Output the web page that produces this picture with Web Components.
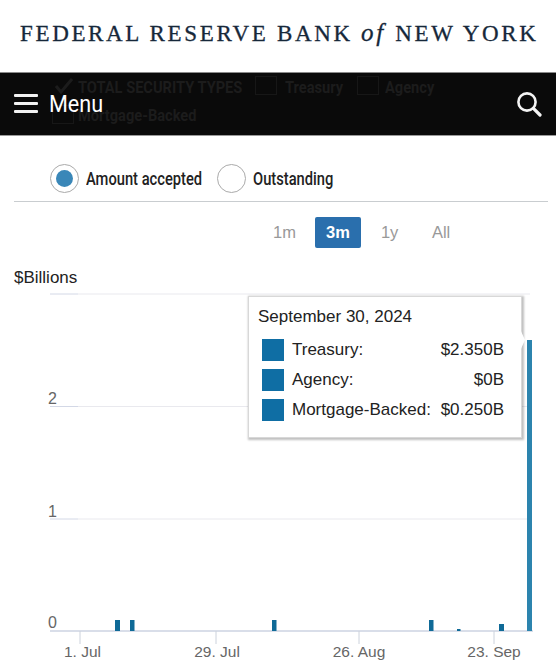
<!DOCTYPE html>
<html>
<head>
<meta charset="utf-8">
<style>
  html, body { margin: 0; background: #fff; }
  body { width: 556px; height: 668px; overflow: hidden; font-family: "Liberation Sans", Arial, sans-serif; }
  fed-masthead i { font-size: 25px; margin-right: 1px; }
</style>
</head>
<body>
<fed-masthead>FEDERAL RESERVE BANK <i>of</i> NEW YORK</fed-masthead>
<fed-navbar></fed-navbar>
<fed-radios></fed-radios>
<fed-range></fed-range>
<fed-chart>
  <fed-tooltip date="September 30, 2024">
    <fed-tip-row label="Treasury:" value="$2.350B"></fed-tip-row>
    <fed-tip-row label="Agency:" value="$0B"></fed-tip-row>
    <fed-tip-row label="Mortgage-Backed:" value="$0.250B"></fed-tip-row>
  </fed-tooltip>
</fed-chart>
<script>
class FedMasthead extends HTMLElement {
  connectedCallback() {
    this.attachShadow({ mode: 'open' });
    this.shadowRoot.innerHTML = `
      <style>
        :host {
          display: flex;
          height: 72px;
          box-sizing: border-box;
          padding: 20px 0 0 20px;
          background: #fff;
          color: #16283a;
          font: 23px/26px "Liberation Serif", "Times New Roman", serif;
          letter-spacing: 2.65px;
          -webkit-text-stroke: .3px #16283a;
          white-space: pre;
        }
      </style>
      <div><slot></slot></div>`;
  }
}

class FedNavbar extends HTMLElement {
  connectedCallback() {
    this.attachShadow({ mode: 'open' });
    this.shadowRoot.innerHTML = `
      <style>
        :host {
          display: flex;
          position: relative;
          height: 64px;
          box-sizing: border-box;
          border-top: 1px solid #8a8a8a;
          border-bottom: 1px solid #9a9a9a;
          background: #0a0a0a;
          align-items: center;
          padding: 0 14px 0 14px;
          overflow: hidden;
        }
        .ghost {
          position: absolute;
          color: #1c1c1c;
          font: bold 17px/20px Roboto, "Liberation Sans", sans-serif;
          transform: scaleX(.86);
          transform-origin: left center;
          white-space: nowrap;
        }
        .box { position: absolute; width: 22px; height: 19px; border: 1px solid #171717; box-sizing: border-box; }
        .burger { display: grid; gap: 5px; width: 24px; position: relative; top: -1px; }
        .burger span { height: 3px; background: #f2f2f2; border-radius: 1px; }
        .label {
          position: relative;
          margin-left: 11px;
          color: #fff;
          font: 24px/28px Roboto, "Liberation Sans", sans-serif;
          transform: scaleX(.9);
          transform-origin: left center;
        }
        .find { position: relative; margin-left: auto; }
        .check { position: absolute; left: 55px; top: 5px; }
      </style>
      <span class="ghost" style="left:78px;top:4px">TOTAL SECURITY TYPES</span>
      <span class="ghost" style="left:285px;top:4px">Treasury</span>
      <span class="ghost" style="left:385px;top:4px">Agency</span>
      <span class="ghost" style="left:78px;top:32px">Mortgage-Backed</span>
      <svg class="check" width="18" height="16" viewBox="0 0 18 16"><path d="M1 8l5 6L17 1" fill="none" stroke="#1c1c1c" stroke-width="3"/></svg>
      <span class="box" style="left:255px;top:3px"></span>
      <span class="box" style="left:357px;top:3px"></span>
      <span class="box" style="left:52px;top:32px"></span>
      <div class="burger"><span></span><span></span><span></span></div>
      <div class="label">Menu</div>
      <svg class="find" width="26" height="26" viewBox="0 0 26 26">
        <circle cx="11" cy="11" r="8.6" fill="none" stroke="#f4f4f4" stroke-width="2.6"/>
        <path d="M17.4 17.4L24 24" stroke="#f4f4f4" stroke-width="3.2" stroke-linecap="round"/>
      </svg>`;
  }
}

class FedRadios extends HTMLElement {
  connectedCallback() {
    this.attachShadow({ mode: 'open' });
    this.shadowRoot.innerHTML = `
      <style>
        :host {
          display: flex;
          align-items: center;
          height: 66px;
          box-sizing: border-box;
          margin: 0 8px 0 14px;
          padding: 21px 0 1px 36px;
          border-bottom: 1px solid #c9cdd0;
          color: #222;
          font: 500 17.5px/22px Roboto, "Liberation Sans", sans-serif;
        }
        .dot {
          flex: none;
          width: 29px;
          height: 29px;
          box-sizing: border-box;
          border: 1.5px solid #aaa;
          border-radius: 50%;
          display: grid;
          place-items: center;
          margin-right: 7px;
        }
        .dot i { width: 17px; height: 17px; border-radius: 50%; background: #3a87b8; }
        .txt { display: inline-block; width: 116px; white-space: nowrap; }
        .txt span { display: inline-block; transform: scaleX(.84); transform-origin: left center; }
        .gap { width: 15px; }
      </style>
      <span class="dot"><i></i></span><span class="txt"><span>Amount accepted</span></span>
      <span class="gap"></span>
      <span class="dot"></span><span class="txt"><span>Outstanding</span></span>`;
  }
}

class FedRange extends HTMLElement {
  connectedCallback() {
    this.attachShadow({ mode: 'open' });
    this.shadowRoot.innerHTML = `
      <style>
        :host {
          display: flex;
          align-items: center;
          height: 31px;
          margin-top: 15px;
          padding-left: 273px;
          color: #999;
          font: 16.5px/20px "Liberation Sans", sans-serif;
        }
        span { flex: none; position: relative; top: -1px; }
        b {
          flex: none;
          width: 46px;
          height: 31px;
          margin: 0 20px 0 19px;
          border-radius: 2px;
          background: #2a6fad;
          color: #fff;
          font-size: 16.5px;
          line-height: 31px;
          text-align: center;
        }
      </style>
      <span>1m</span><b>3m</b><span style="width:51px">1y</span><span>All</span>`;
  }
}

class FedChart extends HTMLElement {
  connectedCallback() {
    this.attachShadow({ mode: 'open' });
    const bars = [[115, 620, 5], [130, 620, 4.5], [272, 620, 4.5], [429, 620, 4.5], [457, 629, 3.5], [499, 624, 5]];
    const ticks = [[80, 82.5, '1. Jul'], [216, 217, '29. Jul'], [359, 359, '26. Aug'], [494, 494, '23. Sep']];
    const top = 248; // page y where this element's svg starts
    this.shadowRoot.innerHTML = `
      <style>
        :host { display: block; position: relative; height: 420px; }
        svg { display: block; }
        text { font-family: "Liberation Sans", sans-serif; }
        .unit { position: absolute; left: 14px; top: 20px; color: #222; font-size: 17px; line-height: 20px; }
      </style>
      <div class="unit">$Billions</div>
      <svg width="556" height="420" viewBox="0 ${top} 556 420">
        ${[294, 406.5, 519].map(y => `
          <line x1="78" x2="530" y1="${y}" y2="${y}" stroke="#e9e9ee"/>
          <line x1="50" x2="78" y1="${y}" y2="${y}" stroke="#d3d8e6"/>`).join('')}
        <line x1="50" x2="533" y1="631" y2="631" stroke="#ccd3e2" stroke-width="1.4"/>
        ${ticks.map(([x, tx, t]) => `
          <line x1="${x}" x2="${x}" y1="631" y2="644" stroke="#ccd2dc"/>
          <text x="${tx}" y="657" text-anchor="middle" font-size="15.5" fill="#666">${t}</text>`).join('')}
        <text x="48" y="404" font-size="16" fill="#666">2</text>
        <text x="48" y="517" font-size="16" fill="#666">1</text>
        <text x="48" y="628" font-size="16" fill="#666">0</text>
        ${bars.map(([x, y, w]) => `<rect x="${x}" y="${y}" width="${w}" height="${631 - y}" fill="#0f6a97"/>`).join('')}
        <rect x="527" y="340" width="5" height="291" fill="#2c84ae"/>
      </svg>
      <slot></slot>`;
  }
}

class FedTooltip extends HTMLElement {
  connectedCallback() {
    this.attachShadow({ mode: 'open' });
    this.shadowRoot.innerHTML = `
      <style>
        :host {
          position: absolute;
          left: 248px;
          top: 48px;
          width: 274px;
          height: 142px;
          box-sizing: border-box;
          padding: 10px 17px 0 9px;
          background: #fff;
          border: 1px solid #d8d8d8;
          box-shadow: 1px 1px 2px 1px rgba(0,0,0,.25);
          color: #222;
          font-size: 17px;
        }
        .date { line-height: 20px; margin-bottom: 12px; }
        .rows { display: grid; gap: 8px; padding-left: 4px; }
        svg { position: absolute; left: 271px; top: 32px; }
      </style>
      <div class="date">${this.getAttribute('date')}</div>
      <div class="rows"><slot></slot></div>
      <svg width="6" height="22" viewBox="0 0 6 22"><path d="M0 0L5 11L0 22Z" fill="#fff"/></svg>`;
  }
}

class FedTipRow extends HTMLElement {
  connectedCallback() {
    this.attachShadow({ mode: 'open' });
    this.shadowRoot.innerHTML = `
      <style>
        :host { display: flex; align-items: center; height: 22px; white-space: nowrap; }
        i { width: 22px; height: 22px; margin-right: 8px; background: #0f6ea4; }
        b { margin-left: auto; font-weight: normal; }
      </style>
      <i></i><span>${this.getAttribute('label')}</span><b>${this.getAttribute('value')}</b>`;
  }
}

customElements.define('fed-masthead', FedMasthead);
customElements.define('fed-navbar', FedNavbar);
customElements.define('fed-radios', FedRadios);
customElements.define('fed-range', FedRange);
customElements.define('fed-chart', FedChart);
customElements.define('fed-tooltip', FedTooltip);
customElements.define('fed-tip-row', FedTipRow);
</script>
</body>
</html>
